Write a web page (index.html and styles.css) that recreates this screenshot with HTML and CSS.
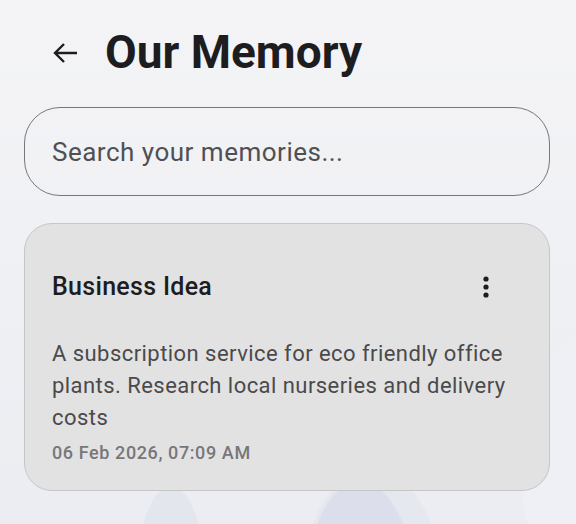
FILE: index.html
```html
<!DOCTYPE html>
<html lang="en">

<head>
    <meta charset="UTF-8">
    <meta name="viewport" content="width=device-width, initial-scale=1.0">
    <title>Our Memory</title>
    <link rel="stylesheet" href="styles.css">
</head>

<body>
    <div class="page">
        <div class="header">
            <button class="back" aria-label="Back">
                <svg width="26" height="22" viewBox="0 0 26 22">
                    <path d="M25 11H3M12 2L3 11l9 9" fill="none" stroke="#1d1d1f" stroke-width="2.4"/>
                </svg>
            </button>
            <h1>Our Memory</h1>
        </div>

        <input type="text" class="search" placeholder="Search your memories...">

        <div class="card">
            <div class="card-top">
                <h2>Business Idea</h2>
                <button class="more" aria-label="More">
                    <svg width="10" height="26" viewBox="0 0 10 26">
                        <circle cx="5" cy="5" r="2.6" fill="#1d1d1f"/>
                        <circle cx="5" cy="13" r="2.6" fill="#1d1d1f"/>
                        <circle cx="5" cy="21" r="2.6" fill="#1d1d1f"/>
                    </svg>
                </button>
            </div>
            <p class="body">A subscription service for eco friendly office plants. Research local nurseries and delivery costs</p>
            <p class="date">06 Feb 2026, 07:09 AM</p>
        </div>
    </div>
</body>

</html>
```

FILE: styles.css
```css
html, body {
    margin: 0;
    height: 100%;
}

body {
    font-family: Roboto, "Noto Sans", sans-serif;
    color: #1d1d1f;
    background:
        radial-gradient(ellipse 36px 100px at 171px 585px, #e4e6ee 0, #e4e6ee 97%, transparent 100%),
        radial-gradient(ellipse 55px 110px at 360px 590px, #dcdfeb 0, #dcdfeb 97%, transparent 100%),
        radial-gradient(ellipse 72px 122px at 372px 590px, #e6e8f0 0, #e6e8f0 97%, transparent 100%),
        radial-gradient(ellipse 80px 140px at 600px 470px, #eef0f5 0, #eef0f5 97%, transparent 100%),
        linear-gradient(#f4f4f6, #ebedf2);
    overflow: hidden;
}

.page {
    padding: 22px 26px 0 24px;
}

.header {
    display: flex;
    align-items: center;
    gap: 27px;
    padding-left: 28px;
    height: 60px;
}

.back {
    border: 0;
    background: none;
    padding: 0;
    display: flex;
    margin-top: 2px;
}

h1 {
    margin: 0;
    font-size: 46px;
    font-weight: 700;
}

.search {
    display: block;
    box-sizing: border-box;
    width: 100%;
    height: 89px;
    margin-top: 25px;
    border: 1.5px solid #77777a;
    border-radius: 36px;
    background: transparent;
    padding: 0 27px;
    font-family: Roboto, sans-serif;
    font-size: 26px;
    letter-spacing: 0.5px;
    color: #333;
    outline: none;
}

.search::placeholder {
    color: #505054;
}

.card {
    margin-top: 27px;
    box-sizing: border-box;
    height: 268px;
    background: #e2e2e2;
    border: 1px solid #c6c6c8;
    border-radius: 28px;
    padding: 48px 27px 0 27px;
}

.card-top {
    display: flex;
    align-items: center;
    justify-content: space-between;
}

h2 {
    margin: 0;
    font-size: 25px;
    font-weight: 500;
    letter-spacing: 0.3px;
    line-height: 30px;
}

.more {
    border: 0;
    background: none;
    padding: 0;
    margin-right: 31px;
    display: flex;
}

.body {
    margin: 36px 0 0 0;
    font-size: 22px;
    letter-spacing: 0.45px;
    line-height: 32px;
    color: #4a4a4c;
}

.date {
    margin: 8px 0 0 0;
    font-size: 18px;
    font-weight: 500;
    letter-spacing: 0.6px;
    color: #77777a;
}
```
